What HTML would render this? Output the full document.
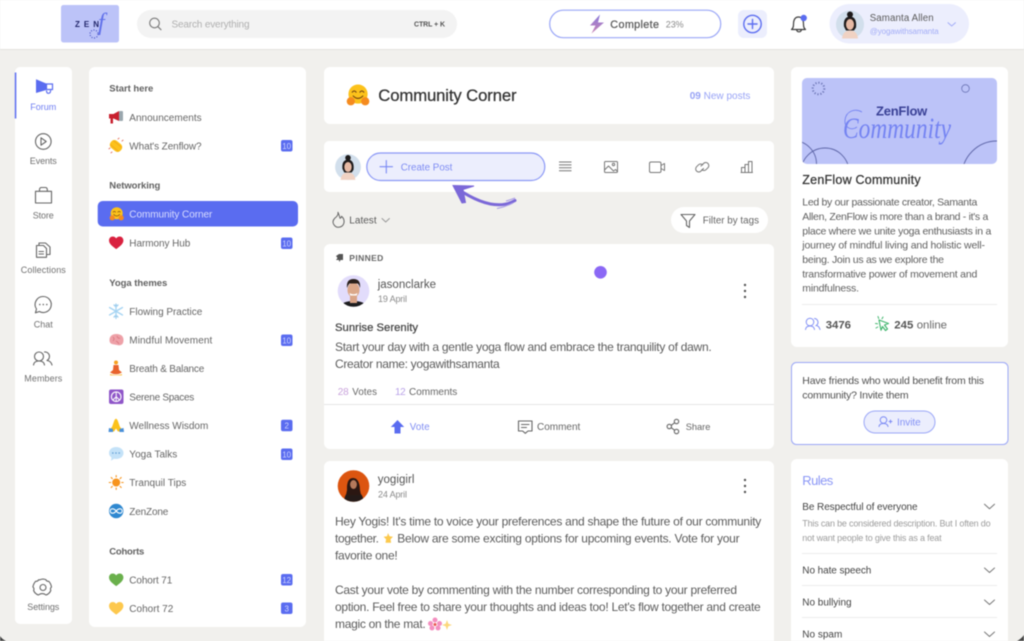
<!DOCTYPE html>
<html lang="en"><head><meta charset="utf-8"><title>ZenFlow Community</title>
<style>
html,body{margin:0;padding:0;background:#f1f0ed;width:1024px;height:641px;overflow:hidden}
svg{display:block;filter:blur(.4px)}
text{font-family:"Liberation Sans",sans-serif;font-size:11px;fill:#5f5f5f;white-space:pre}
.n{font-size:10px;fill:#666}
.r{font-size:9px;fill:#707070;text-anchor:middle}
.h{font-size:9.500px;font-weight:bold;fill:#616161}
.b{font-size:12px;fill:#5c5c5c}
.m{stroke:currentColor;stroke-width:.25px}
.s{fill:none;stroke:#666;stroke-width:1.1;stroke-linecap:round;stroke-linejoin:round}
.g{fill:none;stroke:#777;stroke-width:1;stroke-linecap:round;stroke-linejoin:round}
.bd{fill:#5a6cf0}
.bt{font-size:8px;fill:#cfd5ff;text-anchor:middle}
.ln{stroke:#ececec;stroke-width:1}
</style></head><body>
<svg width="1024" height="641" viewBox="0 0 1024 641" xmlns="http://www.w3.org/2000/svg">
<defs>
<linearGradient id="bolt" x1="0" y1="0" x2="0" y2="1"><stop offset="0" stop-color="#8a7bdc"/><stop offset="1" stop-color="#c983b4"/></linearGradient>
<g id="hug"><circle cx="12" cy="10.500" r="10" fill="#fcc21b"/><path d="M6 8.500q2-2.500 4 0M14 8.500q2-2.500 4 0" fill="none" stroke="#7a4b12" stroke-width="1.200" stroke-linecap="round"/><path d="M7 12.500q5 5 10 0" fill="none" stroke="#7a4b12" stroke-width="1.200" stroke-linecap="round"/><circle cx="4.500" cy="18" r="4.300" fill="#f58b1f"/><circle cx="19.500" cy="18" r="4.300" fill="#f58b1f"/></g>
<path id="heart" d="M12 21C5 16 0 12 0 6.500 0 2.800 2.800 0 6.200 0 8.600 0 10.800 1.300 12 3.200 13.200 1.300 15.400 0 17.800 0 21.200 0 24 2.800 24 6.500 24 12 19 16 12 21Z"/>
<g id="chev"><path d="M0 0l5 4.500 5-4.500" fill="none" stroke="#777" stroke-width="1" stroke-linecap="round" stroke-linejoin="round"/></g>
<g id="sam"><circle cx="0" cy="0" r="14" fill="#d2dfec"/><path d="M-6 2C-7-6-3-8 0-8S7-6 6 3L4 6H-4Z" fill="#1d1a1a"/><circle cx="0" cy="-10" r="3" fill="#1d1a1a"/><ellipse cx="0" cy="0" rx="4" ry="5.500" fill="#e6b9a4"/><path d="M-8 14Q-7 6 0 6T8 14Z" fill="#f0d2c3"/></g>
</defs>

<rect width="1024" height="641" fill="#f1f0ed"/>

<!-- header -->
<rect width="1024" height="49" fill="#fff"/><rect y="49" width="1024" height="1" fill="#e3e2df"/>
<rect x="61" y="5" width="58" height="37.500" rx="2.500" fill="#bcc3f8"/>
<text x="75" y="27" textLength="24" style="font-size:8px;font-weight:bold;fill:#22266a">ZEN</text>
<text x="98" y="30" style="font-family:'Liberation Serif',serif;font-style:italic;font-size:24px;fill:#6070ea">f</text>
<circle cx="94" cy="34" r="4" fill="none" stroke="#4a55c5" stroke-width="1.200" stroke-dasharray="1 1.600"/>

<rect x="137" y="10" width="320" height="28" rx="14" fill="#f3f3f3"/>
<circle cx="154.500" cy="23" r="4.800" class="s" style="stroke:#7a7a7a"/><path d="M158 26.800l3 2.900" class="s" style="stroke:#7a7a7a"/>
<text x="171.500" y="27.500" textLength="78" style="font-size:10px;fill:#b0b0b0">Search everything</text>
<text x="414" y="26.500" textLength="31" style="font-size:7px;font-weight:bold;fill:#555">CTRL + K</text>

<rect x="549.700" y="10.200" width="171" height="27.500" rx="13.700" fill="#fff" stroke="#9ba7f7" stroke-width="1.200"/>
<path d="M600 14.500L590 25.500H595.500L591.500 33.500 604 22.500H598Z" fill="url(#bolt)"/>
<text x="610.300" y="28" textLength="48.700" class="m" style="font-size:10.800px;color:#5a5a5a;fill:#5a5a5a">Complete</text>
<text x="665.700" y="27.500" textLength="18" style="font-size:9px;fill:#8a8a8a">23%</text>

<rect x="738" y="10" width="29" height="28" rx="6" fill="#eceefd"/>
<circle cx="752.500" cy="24" r="8.700" fill="none" stroke="#5d6ef0" stroke-width="1.400"/><path d="M752.500 19.500v9M748 24h9" stroke="#5d6ef0" stroke-width="1.400" stroke-linecap="round"/>

<path d="M791.500 29.500q2-1.500 2-5 0-7.500 5-7.500t5 7.500q0 3.500 2 5ZM796.500 29.500q.5 2.300 2.500 2.300t2.500-2.300" fill="none" stroke="#3d3d3d" stroke-width="1.200" stroke-linejoin="round"/>
<circle cx="803.700" cy="18" r="3.200" fill="#5a6cf0"/>

<rect x="829.500" y="4" width="139.500" height="39.500" rx="19.700" fill="#eceefd"/>
<use href="#sam" x="850" y="24.500"/>
<text x="869.700" y="21" textLength="64" style="font-size:9.700px;fill:#5a5a5a">Samanta Allen</text>
<text x="869.700" y="34" textLength="69" style="font-size:8px;fill:#a3adf7">@yogawithsamanta</text>
<path d="M948 22.700l3.700 3.300 3.700-3.300" fill="none" stroke="#a3adf7" stroke-width="1" stroke-linecap="round"/>

<!-- rail -->
<rect x="15" y="67" width="57" height="557" rx="5" fill="#fff"/>
<rect x="14.800" y="72.500" width="1.500" height="46" fill="#5a6cf0"/>
<path d="M36 79.300L46.200 83.500V90L36 93Z" fill="#5a6cf0"/><path d="M46.500 84H52.500V89.500H46.500ZM46.500 90.500q0 3 2.200 2.800 1.900-.2 1.900-3" fill="none" stroke="#5a6cf0" stroke-width="1.200"/>
<text x="43.300" y="110" textLength="26" class="r" style="fill:#6f7ef2">Forum</text>

<circle cx="43.300" cy="141.500" r="7.800" class="s"/><path d="M41 137.800l5.200 3.700-5.200 3.700Z" class="s"/>
<text x="43.300" y="164" textLength="27" class="r">Events</text>

<path d="M35.500 191.300h16v11.700h-16ZM39.500 191.300v-1.500q0-2.300 2-2.300h3.800q2 0 2 2.300v1.500" class="s"/>
<text x="43.300" y="218.500" textLength="21" class="r">Store</text>

<path d="M39 245.500l0-2.500h6.500l4.500 4v7.500h-3M36.500 245.500h7l3 3v8.800h-10Z" class="s"/><path d="M39 251.500h4.500M39 254h4.500" class="s"/>
<text x="43.300" y="273" textLength="45" class="r">Collections</text>

<path d="M43.300 296.500a8 8 0 1 1-3.900 15l-4 1.300 1.100-3.800a8 8 0 0 1 6.800-12.500Z" class="s"/><circle cx="39.800" cy="304.500" r=".8" fill="#666"/><circle cx="43.300" cy="304.500" r=".8" fill="#666"/><circle cx="46.800" cy="304.500" r=".8" fill="#666"/>
<text x="43.300" y="327.500" textLength="19" class="r">Chat</text>

<circle cx="39" cy="356.500" r="4.500" class="s"/><path d="M33.500 365q.5-4 5.500-4t5.500 4" class="s"/><path d="M44.500 352a4.500 4.500 0 0 1 2.500 8.500q4 .5 5 4.500" class="s"/>
<text x="43.300" y="381.500" textLength="38" class="r">Members</text>

<path d="M40 579.800q3-1.400 6 0 .5 1.700 2.700 1.500 2.200 2.300 2.800 5.700-1.700 1.500-.7 3.500-1.300 3.300-4.800 4.500-1.700-1.400-3.800-1.400t-3.800 1.400q-3.500-1.200-4.800-4.500 1-2-.7-3.500.6-3.400 2.800-5.700 2.200.2 2.800-1.500Z" class="s"/><circle cx="43" cy="587.500" r="3" class="s"/>
<text x="43.300" y="610" textLength="32" class="r">Settings</text>

<!-- channels -->
<rect x="89" y="67" width="217" height="560" rx="6" fill="#fff"/>
<text x="109.300" y="91.500" textLength="44" class="h">Start here</text>
<text x="109.300" y="188.500" textLength="51" class="h">Networking</text>
<text x="109.300" y="286" textLength="58" class="h">Yoga themes</text>
<text x="109.300" y="554.500" textLength="35" class="h">Cohorts</text>

<rect x="97.700" y="201" width="200.300" height="25.500" rx="5" fill="#5a6cf0"/>

<text x="129.300" y="120.800" textLength="72.300" class="n">Announcements</text>
<text x="129.300" y="149.300" textLength="72.300" class="n">What's Zenflow?</text>
<text x="129.300" y="217.700" textLength="83" class="n" style="fill:#d9ddff">Community Corner</text>
<text x="129.300" y="246.500" textLength="61" class="n">Harmony Hub</text>
<text x="129.300" y="315" textLength="73" class="n">Flowing Practice</text>
<text x="129.300" y="343.500" textLength="83" class="n">Mindful Movement</text>
<text x="129.300" y="372" textLength="75" class="n">Breath &amp; Balance</text>
<text x="129.300" y="400.500" textLength="65" class="n">Serene Spaces</text>
<text x="129.300" y="429" textLength="79" class="n">Wellness Wisdom</text>
<text x="129.300" y="457.500" textLength="48" class="n">Yoga Talks</text>
<text x="129.300" y="486" textLength="57" class="n">Tranquil Tips</text>
<text x="129.300" y="515" textLength="39" class="n">ZenZone</text>
<text x="129.300" y="583.500" textLength="43" class="n">Cohort 71</text>
<text x="129.300" y="612" textLength="44" class="n">Cohort 72</text>

<!-- channel icons -->
<path d="M109 114h4.500l5.500-3v10l-5.500-2.500H113v5h-2.500v-5H109Z" fill="#c8202f"/><rect x="119" y="111" width="4" height="10" rx="1" fill="#9aa7ae"/>
<g transform="rotate(40 116 146)"><rect x="109.500" y="141.500" width="13" height="9" rx="4" fill="#fcc21b"/><path d="M110.500 143.500h11M110.500 148.500h11" stroke="#f2a51a" stroke-width=".7"/></g>
<path d="M118 139l1-.8M122 141l1-.8M110 148l-1 .8M112 152l-1 .8" stroke="#e77b6a" stroke-width="1" stroke-linecap="round"/>
<use href="#hug" transform="translate(109.500 207) scale(.6)"/>
<use href="#heart" transform="translate(109 236.500) scale(.6)" fill="#d9213f"/>
<g stroke="#a5d4f3" stroke-width="1.300" stroke-linecap="round"><path d="M116 304v14.500M109.500 307.500l13 7.500M122.500 307.500l-13 7.500M114 305l2 2 2-2M114 317l2-2 2 2"/></g>
<path d="M109.500 340c0-4 3-6 6.500-6s7.500 1 7.500 6-3 6-6.500 5-7.500 0-7.500-5Z" fill="#eea1a8"/><path d="M113 337q2 2 0 4M117 336q1 3 3 2M116 341q2 1 3 3" fill="none" stroke="#d9767f" stroke-width=".8"/>
<circle cx="116" cy="362.500" r="2" fill="#f7a11f"/><path d="M113.500 365h5l.5 5 3 2.500q-6 3.500-12 0l3-2.500Z" fill="#e8632c"/><path d="M110 374q6 2 12 0v1.500h-12Z" fill="#fcc75a"/>
<rect x="109" y="389.500" width="14.500" height="14.500" rx="2" fill="#8f56c8"/><circle cx="116.200" cy="396.700" r="4.800" fill="none" stroke="#fff" stroke-width="1.100"/><path d="M116.200 392v9.500M116.200 396.700l-3.400 3.400M116.200 396.700l3.400 3.400" stroke="#fff" stroke-width="1"/>
<path d="M116 418.500l-1.500 1.500-2.500 7-3 3v1.500h5l2-3 2 3h5V430l-3-3-2.500-7Z" fill="#fcc21b"/><path d="M109 428l4 1v3h-4.500ZM123.500 428l-4 1v3h4.500Z" fill="#4a90d9"/>
<path d="M116 447c4.500 0 7.500 2.500 7.500 6s-3 6-7.500 6q-1 0-2-.2l-3 2 .5-3.300q-2.500-1.800-2.500-4.500c0-3.500 3-6 7-6Z" fill="#c4e2f8"/><circle cx="112.800" cy="453" r=".8" fill="#5f9cd4"/><circle cx="116" cy="453" r=".8" fill="#5f9cd4"/><circle cx="119.200" cy="453" r=".8" fill="#5f9cd4"/>
<circle cx="116.200" cy="482.500" r="4" fill="#f7941d"/><path d="M116.200 475.500v1.500M116.200 488v1.500M109.200 482.500h1.500M121.700 482.500h1.500M111.200 477.500l1.100 1.100M120.100 486.400l1.100 1.100M111.200 487.500l1.100-1.100M120.100 478.600l1.100-1.100" stroke="#f7941d" stroke-width="1.100" stroke-linecap="round"/>
<circle cx="116.200" cy="511" r="7.200" fill="#2f88d0"/><path d="M116.200 511c-1.500-2-2.700-2.200-3.800-2.200a2.200 2.200 0 0 0 0 4.400c1.100 0 2.300-.2 3.800-2.200s2.700-2.200 3.800-2.200a2.200 2.200 0 0 1 0 4.400c-1.100 0-2.300-.2-3.800-2.200Z" fill="none" stroke="#fff" stroke-width="1.100"/>
<use href="#heart" transform="translate(109 573.500) scale(.6)" fill="#6ab04c"/>
<use href="#heart" transform="translate(109 602) scale(.6)" fill="#fdc84d"/>

<!-- badges -->
<g>
<rect x="281" y="140" width="11.500" height="11.500" rx="2" class="bd"/><text x="286.700" y="148.800" class="bt">10</text>
<rect x="281" y="237.500" width="11.500" height="11.500" rx="2" class="bd"/><text x="286.700" y="246.300" class="bt">10</text>
<rect x="281" y="334.500" width="11.500" height="11.500" rx="2" class="bd"/><text x="286.700" y="343.300" class="bt">10</text>
<rect x="281" y="419.700" width="11.500" height="11.500" rx="2" class="bd"/><text x="286.700" y="428.500" class="bt">2</text>
<rect x="281" y="448.500" width="11.500" height="11.500" rx="2" class="bd"/><text x="286.700" y="457.300" class="bt">10</text>
<rect x="281" y="574" width="11.500" height="11.500" rx="2" class="bd"/><text x="286.700" y="582.800" class="bt">12</text>
<rect x="281" y="602.500" width="11.500" height="11.500" rx="2" class="bd"/><text x="286.700" y="611.300" class="bt">3</text>
</g>

<!-- title -->
<rect x="324" y="67" width="450" height="57" rx="6" fill="#fff"/>
<use href="#hug" transform="translate(346.500 84) scale(.96)"/>
<text x="378.300" y="101" textLength="138.300" class="m" style="font-size:16.700px;color:#333;fill:#333">Community Corner</text>
<text x="689.700" y="99" textLength="60.700" style="font-size:10px;fill:#98a3f6"><tspan font-weight="bold">09</tspan> New posts</text>

<!-- composer -->
<rect x="324" y="141" width="450" height="51" rx="5" fill="#fff"/>
<use href="#sam" transform="translate(348 167) scale(.92)"/>
<rect x="366.800" y="153" width="178" height="27.500" rx="13.700" fill="#eceefd" stroke="#8b98f6" stroke-width="1.200"/>
<path d="M386.300 160.500v12.500M380 166.700h12.500" stroke="#7b8af4" stroke-width="1.100" stroke-linecap="round"/>
<text x="400.700" y="170.500" textLength="51.700" style="font-size:9.800px;fill:#7e8cf3">Create Post</text>
<path d="M559 162h12.500M559 164.900h12.500M559 167.800h12.500M559 170.700h12.500" stroke="#777" stroke-width="1"/>
<rect x="604.500" y="161.500" width="13" height="11" rx="1" class="g"/><circle cx="613.500" cy="164.500" r="1.200" class="g"/><path d="M604.500 170l4-4 5 5 2-1.500 2 2" class="g"/>
<rect x="649.500" y="162" width="11.500" height="10.500" rx="1.500" class="g"/><path d="M661 165.500l3.500-2v7l-3.500-2" class="g"/>
<path d="M701 166l2.500-2.500a3 3 0 0 1 4.500 4.200l-2 2a3 3 0 0 1-4.200 0M703.500 168.500l-2.500 2.500a3 3 0 0 1-4.500-4.200l2-2a3 3 0 0 1 4.200 0" class="g"/>
<path d="M741.500 172.500v-5h3.500v5M745 172.500v-8h3.500v8M748.500 172.500V161.500h3.500v11M741 172.500h11.500" class="g"/>

<!-- arrow -->
<path d="M515 200.500C504 207 486 208 457 188.500" fill="none" stroke="#7b68d8" stroke-width="3" stroke-linecap="round"/>
<path d="M453 185.500l21 .5-11 3.500 2.500 13-3.500.5Z" fill="#7b68d8" stroke="#7b68d8" stroke-width="1"/>
<path d="M513 203q-8 4-16 5.500M515 198q-5 2-9 3" fill="none" stroke="#a89ae6" stroke-width="1"/>

<!-- sort -->
<path d="M338 212.500q.5 3-3 5.500-3 3-1.500 6 2 3.500 5 3.300 4.500-.3 5.500-4.500.6-4-2.500-6.500-.5 2-1.500 2-.7-3-2-6Z" class="g" style="stroke:#666"/>
<text x="349.300" y="223.500" textLength="27.300" style="font-size:10px;fill:#5a5a5a">Latest</text>
<path d="M382 218.500l3.700 3.500 3.700-3.500" class="g" style="stroke:#999"/>
<rect x="671" y="207" width="97" height="26" rx="13" fill="#fff"/>
<path d="M681 214.500h14l-5.500 6.500v6.500l-3-2v-4.500Z" class="s"/>
<text x="702.700" y="223.500" textLength="56.300" style="font-size:9.800px;fill:#666">Filter by tags</text>

<!-- post 1 -->
<rect x="324" y="244" width="450" height="205" rx="6" fill="#fff"/>
<path d="M336 256l3-2h4v6h-2.500l-1 2-.7-2H336l1.500-2Z" fill="#555"/>
<text x="349.300" y="261" textLength="34" style="font-size:8.500px;font-weight:bold;fill:#666">PINNED</text>
<circle cx="600.500" cy="272.300" r="6.300" fill="#8b68f5"/>
<circle cx="353.500" cy="291" r="15.800" fill="#e2dcfb"/>
<clipPath id="c1"><circle cx="353.500" cy="291" r="15.800"/></clipPath>
<g clip-path="url(#c1)"><path d="M338 310q2-9 15.500-9t15.500 9Z" fill="#1d1d1f"/><rect x="350" y="295" width="7" height="8" fill="#d9a488"/><ellipse cx="353.500" cy="290" rx="6" ry="7.500" fill="#dba88a"/><path d="M347 288q-1-9 6.500-9t6.500 9q-1-4-2.500-4.500h-8Q348 285 347 288Z" fill="#2a201b"/><path d="M349.500 293q4 2.500 8 0l-.8 2.500h-6.400Z" fill="#fff"/></g>
<text x="377.700" y="288" textLength="58.300" style="font-size:11.500px;fill:#555">jasonclarke</text>
<text x="378" y="302" textLength="29" style="font-size:9px;fill:#8a8a8a">19 April</text>
<g fill="#555"><circle cx="745" cy="285" r="1.200"/><circle cx="745" cy="291" r="1.200"/><circle cx="745" cy="297" r="1.200"/></g>
<text x="335" y="331" textLength="83" class="m" style="font-size:11.300px;color:#444;fill:#444">Sunrise Serenity</text>
<text x="335" y="351" textLength="376.700" class="b">Start your day with a gentle yoga flow and embrace the tranquility of dawn.</text>
<text x="335" y="368" textLength="164.700" class="b">Creator name: yogawithsamanta</text>
<text x="337.700" y="395" textLength="11" style="font-size:10px;fill:#c9a3dc">28</text>
<text x="352.300" y="395" textLength="24.700" style="font-size:9.700px;fill:#666">Votes</text>
<text x="395" y="395" textLength="10.700" style="font-size:10px;fill:#b9a2e8">12</text>
<text x="409" y="395" textLength="48.300" style="font-size:10px;fill:#666">Comments</text>
<rect x="324" y="404" width="450" height="1" fill="#e6e6e6"/>
<path d="M397.500 420l6.700 7h-3.700v6.500h-6V427h-3.700Z" fill="#5a6cf0"/>
<text x="409.700" y="430" textLength="20" style="font-size:9.700px;fill:#7e8cf3">Vote</text>
<path d="M518.500 421h13.500v10h-4l-2.700 2.300-2.700-2.300h-4.100ZM521.500 424.500h7.500M521.500 427.500h5" class="s"/>
<text x="537" y="430" textLength="43.300" style="font-size:10px;fill:#666">Comment</text>
<circle cx="676.500" cy="421.500" r="2.200" class="s"/><circle cx="669.300" cy="426.500" r="2.200" class="s"/><circle cx="676.500" cy="431.500" r="2.200" class="s"/><path d="M671.200 425.300l3.400-2.500M671.200 427.700l3.400 2.500" class="s"/>
<text x="685.700" y="430" textLength="24.700" style="font-size:9.300px;fill:#666">Share</text>

<!-- post 2 -->
<rect x="324" y="461" width="450" height="190" rx="6" fill="#fff"/>
<circle cx="353.500" cy="486" r="15.800" fill="#dc5510"/>
<clipPath id="c2"><circle cx="353.500" cy="486" r="15.800"/></clipPath>
<g clip-path="url(#c2)"><path d="M344 503q0-12 9.500-12t10.500 12Z" fill="#241a18"/><path d="M347 490q-.5-12 6-12t7 12l1 5h-15Z" fill="#2b1712"/><ellipse cx="353.500" cy="484.500" rx="3.400" ry="4.500" fill="#b57a5c"/></g>
<text x="377.700" y="483" textLength="36.700" style="font-size:11.500px;fill:#555">yogigirl</text>
<text x="378" y="497.500" textLength="29" style="font-size:9px;fill:#8a8a8a">24 April</text>
<g fill="#555"><circle cx="745" cy="480" r="1.200"/><circle cx="745" cy="486" r="1.200"/><circle cx="745" cy="492" r="1.200"/></g>
<text x="335" y="525.500" textLength="426.300" class="b">Hey Yogis! It's time to voice your preferences and shape the future of our community</text>
<text x="335" y="542.500" textLength="44" class="b">together.</text>
<path d="M388 533l1.500 3.200 3.500.5-2.500 2.500.6 3.500H385.500l.6-3.500-2.500-2.500 3.500-.5Z" fill="#fcc94d"/>
<text x="397.300" y="542.500" textLength="342.300" class="b">Below are some exciting options for upcoming events. Vote for your</text>
<text x="335" y="559.500" textLength="62.700" class="b">favorite one!</text>
<text x="335" y="594" textLength="402" class="b">Cast your vote by commenting with the number corresponding to your preferred</text>
<text x="335" y="611" textLength="425.700" class="b">option. Feel free to share your thoughts and ideas too! Let's flow together and create</text>
<text x="335" y="628" textLength="90.700" class="b">magic on the mat.</text>
<g fill="#f48fc0"><circle cx="435" cy="620" r="2.500"/><circle cx="430.500" cy="623.500" r="2.500"/><circle cx="439.500" cy="623.500" r="2.500"/><circle cx="432" cy="628" r="2.500"/><circle cx="438" cy="628" r="2.500"/></g><circle cx="435" cy="624.500" r="1.500" fill="#e9574f"/>
<path d="M447 620l1.300 3.700 3.700 1.300-3.700 1.300-1.300 3.700-1.300-3.700-3.700-1.300 3.700-1.300Z" fill="#fcd77a"/>

<!-- about -->
<rect x="791" y="67" width="217" height="280" rx="6" fill="#fff"/>
<rect x="802" y="78" width="195" height="86" rx="5" fill="#bcc3f8"/>
<circle cx="818.500" cy="88.500" r="5.800" fill="none" stroke="#7079b9" stroke-width="2" stroke-dasharray="1.200 1.800"/>
<circle cx="965.500" cy="88.500" r="3.800" fill="none" stroke="#6b74b5" stroke-width=".8"/>
<clipPath id="c3"><rect x="802" y="78" width="195" height="86" rx="5"/></clipPath>
<g clip-path="url(#c3)" fill="none" stroke="#5e66a8" stroke-width=".9"><circle cx="793" cy="164" r="23.500"/><circle cx="825" cy="172" r="24"/><circle cx="997" cy="176" r="35"/></g>
<text x="876" y="115.500" textLength="51.300" style="font-size:13px;font-weight:bold;fill:#3a4196">ZenFlow</text>
<text x="843" y="138" textLength="108" lengthAdjust="spacingAndGlyphs" style="font-family:'Liberation Serif',serif;font-style:italic;font-size:30px;fill:#7483f2">Community</text>
<path d="M862 112c-7-4-16-1-17 8-1 8 7 11 12 7" fill="none" stroke="#7483f2" stroke-width=".9"/>
<text x="802.300" y="184" textLength="118.300" class="m" style="font-size:12.500px;color:#333;fill:#333">ZenFlow Community</text>
<g>
<text x="802.300" y="205.500" textLength="175" style="font-size:10.500px">Led by our passionate creator, Samanta</text>
<text x="802.300" y="220" textLength="186" style="font-size:10.500px">Allen, ZenFlow is more than a brand - it's a</text>
<text x="802.300" y="234.500" textLength="189" style="font-size:10.500px">place where we unite yoga enthusiasts in a</text>
<text x="802.300" y="248.500" textLength="182.700" style="font-size:10.500px">journey of mindful living and holistic well-</text>
<text x="802.300" y="263" textLength="141.700" style="font-size:10.500px">being. Join us as we explore the</text>
<text x="802.300" y="277.500" textLength="175" style="font-size:10.500px">transformative power of movement and</text>
<text x="802.300" y="291.500" textLength="56.700" style="font-size:10.500px">mindfulness.</text>
</g>
<line x1="802" y1="304.500" x2="997" y2="304.500" class="ln"/>
<circle cx="810" cy="322" r="3.800" fill="none" stroke="#8391f5" stroke-width="1"/><path d="M805.500 329.500q.5-3.500 4.500-3.500t4.500 3.500M814.500 318.500a3.800 3.800 0 0 1 1.700 7q3 .5 3.800 4" fill="none" stroke="#8391f5" stroke-width="1" stroke-linecap="round"/>
<text x="825.700" y="328.500" textLength="25.300" style="font-size:11.400px;font-weight:bold;fill:#555">3476</text>
<path d="M879 320l9.500 3.500-4 1.500 3 4-2 1.500-3-4-1.500 3.800Z" fill="none" stroke="#3fb56c" stroke-width="1.100" stroke-linejoin="round"/><path d="M875.500 323.500l2 .3M878 316.500l.7 2M883 317l-1 1.700M876 328l1.800-1" stroke="#3fb56c" stroke-width="1" stroke-linecap="round"/>
<text x="894.300" y="328.500" textLength="19" style="font-size:11.400px;font-weight:bold;fill:#555">245</text>
<text x="916.700" y="328.500" textLength="30.300" style="font-size:11.400px;fill:#666">online</text>

<!-- invite -->
<rect x="791.500" y="362.500" width="216.500" height="82" rx="5" fill="#fff" stroke="#9ba7f7" stroke-width="1"/>
<text x="802.300" y="383.800" textLength="181.700" style="font-size:10.500px;fill:#505050">Have friends who would benefit from this</text>
<text x="802.300" y="398.300" textLength="106.300" style="font-size:10.500px;fill:#505050">community? Invite them</text>
<rect x="864" y="411" width="71" height="22" rx="11" fill="#eceefd" stroke="#9ba7f7" stroke-width="1"/>
<circle cx="883.500" cy="420" r="3.300" fill="none" stroke="#7b8af4" stroke-width="1"/><path d="M879 426.500q.5-3 4.500-3t4.500 3M889 421.500h3M890.500 420v3" fill="none" stroke="#7b8af4" stroke-width="1" stroke-linecap="round"/>
<text x="897" y="425.500" textLength="23.700" style="font-size:10px;fill:#8391f5">Invite</text>

<!-- rules -->
<rect x="791" y="459" width="217" height="190" rx="6" fill="#fff"/>
<text x="802.300" y="485" textLength="31" style="font-size:13px;fill:#8b97f6">Rules</text>
<text x="802.300" y="509.800" textLength="115.300" style="font-size:10px;fill:#444">Be Respectful of everyone</text>
<use href="#chev" x="984.500" y="504.200"/>
<text x="802.300" y="526.500" textLength="188.300" style="font-size:9px;fill:#9c9c9c">This can be considered description. But I often do</text>
<text x="802.300" y="541" textLength="139.300" style="font-size:9px;fill:#9c9c9c">not want people to give this as a feat</text>
<line x1="802" y1="553.500" x2="997" y2="553.500" class="ln"/>
<text x="802.300" y="573.500" textLength="69" style="font-size:10px;fill:#444">No hate speech</text>
<use href="#chev" x="984.500" y="568"/>
<line x1="802" y1="585.500" x2="997" y2="585.500" class="ln"/>
<text x="802.300" y="605.500" textLength="49.300" style="font-size:10px;fill:#444">No bullying</text>
<use href="#chev" x="984.500" y="600"/>
<line x1="802" y1="617.500" x2="997" y2="617.500" class="ln"/>
<text x="802.300" y="637.500" textLength="40" style="font-size:10px;fill:#444">No spam</text>
<use href="#chev" x="984.500" y="632"/>

<!-- screenshot corners -->
<path d="M0 636q2 3 6 5H0Z" fill="#444"/>
<path d="M1024 635q-3 4-7 6h7Z" fill="#444"/>
</svg>
</body></html>
